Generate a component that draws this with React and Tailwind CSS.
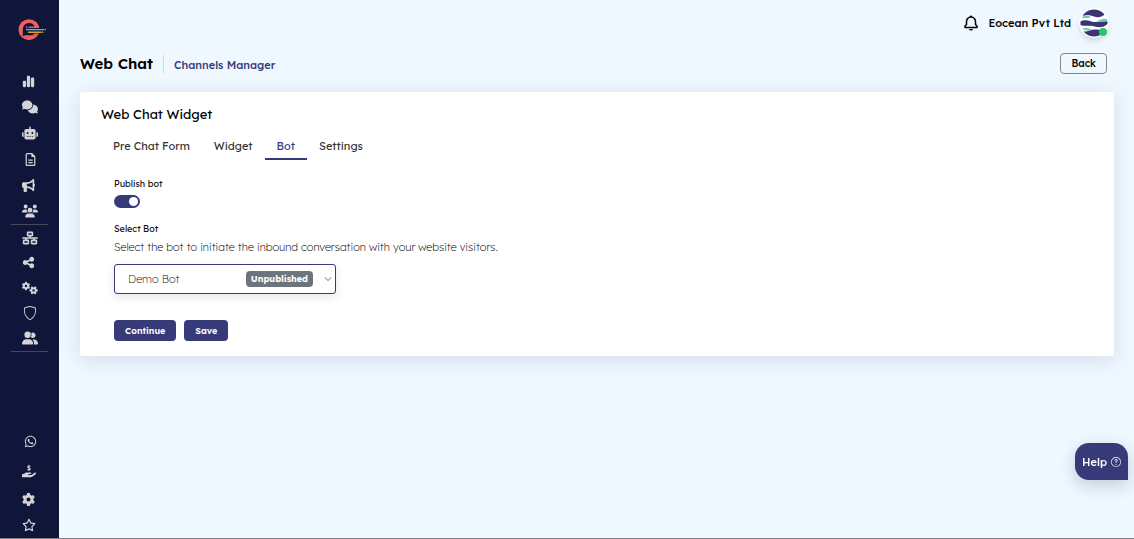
import { useState } from "react";
import {
  FaChartSimple,
  FaComments,
  FaRobot,
  FaRegFileLines,
  FaBullhorn,
  FaUsers,
  FaNetworkWired,
  FaShareNodes,
  FaGears,
  FaUserGroup,
  FaWhatsapp,
  FaHandHoldingDollar,
  FaGear,
  FaRegStar,
} from "react-icons/fa6";
import { BsShield, BsQuestionCircle, BsChevronDown } from "react-icons/bs";
import { BiBell } from "react-icons/bi";

const mainLinks = [
  { label: "Dashboard", Icon: FaChartSimple, size: "size-[13px]" },
  { label: "Conversations", Icon: FaComments, size: "size-4" },
  { label: "Bots", Icon: FaRobot, size: "size-4" },
  { label: "Reports", Icon: FaRegFileLines, size: "ml-0.5 size-[13px]" },
  { label: "Campaigns", Icon: FaBullhorn, size: "size-[13px]" },
  { label: "Audience", Icon: FaUsers, size: "size-4" },
];

const manageLinks = [
  { label: "Channels", Icon: FaNetworkWired, size: "size-4" },
  { label: "Integrations", Icon: FaShareNodes, size: "size-[13px]" },
  { label: "Automation", Icon: FaGears, size: "size-4" },
  { label: "Security", Icon: BsShield, size: "ml-px size-[14px]" },
  { label: "Users", Icon: FaUserGroup, size: "size-4" },
];

const accountLinks = [
  { label: "WhatsApp", Icon: FaWhatsapp, size: "ml-0.5 size-[13px]" },
  { label: "Billing", Icon: FaHandHoldingDollar, size: "size-[14px]" },
];

const settingLinks = [
  { label: "Settings", Icon: FaGear, size: "size-[13px]" },
  { label: "Favourites", Icon: FaRegStar, size: "size-[14px]" },
];

function NavGroup({ links, rowClass, className = "" }) {
  return (
    <ul className={className}>
      {links.map(({ label, Icon, size }) => (
        <li key={label}>
          <a href="#" aria-label={label} className={`flex items-center pl-[11px] ${rowClass}`}>
            <Icon className={size} />
          </a>
        </li>
      ))}
    </ul>
  );
}

function Logo() {
  return (
    <svg viewBox="0 0 28 22" className="h-[22px] w-7" aria-hidden="true">
      <circle cx="11" cy="10.700" r="10.500" fill="#ee5e62" />
      <path d="M4.800 17.200V10.500a6.300 6.300 0 0 1 12.300-2.200H22V14.600H16.500L14.500 16.200H7z" fill="#10163a" />
      <path d="M8 8.200h1.400M10.500 8.200H21" stroke="#ee5e62" strokeWidth="1.400" />
      <path d="M8 10.600h18M26.600 10.600H28" stroke="#54c3b8" strokeWidth="1.300" />
      <path d="M10 13.200h13.500M24.200 13.200h1.200" stroke="#d5a62c" strokeWidth="1.600" />
    </svg>
  );
}

function Avatar() {
  return (
    <span className="relative block size-[30px] rounded-full bg-white shadow-md">
      <svg viewBox="0 0 30 30" className="size-full" aria-hidden="true">
        <defs>
          <clipPath id="avatar-clip">
            <circle cx="15" cy="15" r="13.600" />
          </clipPath>
        </defs>
        <g clipPath="url(#avatar-clip)">
          <path d="M4 6C8-1 22-1 26 6 24 8 20 10.500 15 8.500 11 7 8 6 4 8z" fill="#3a3474" />
          <path d="M2.500 10C5 6.500 9 7 12 9 9 10.500 6 10 2.500 10z" fill="#7cc5b8" />
          <path d="M1 13.500c5-2.500 9-1 13.500.5 5 .5 9-1.500 14.500-.5v2c-4 4-9 4.500-13.500 3S6 18.500 1 17z" fill="#3a3474" />
          <path d="M17 13.200c4-1 7-3.500 11.500-2v1.800c-4.500 1-7 1.200-11.500.2z" fill="#7cc5b8" />
          <path d="M3 20.500c4-1 7-.5 10 1.200-3 1.300-7 1.300-10-1.200z" fill="#7cc5b8" />
          <path d="M4.500 23.500c6 0 8-2.500 13.500-2s6 1 8 1.500C22 31 9 31 4.500 23.500z" fill="#3a3474" />
        </g>
      </svg>
      <span className="absolute right-0.5 bottom-0.5 size-2 rounded-full bg-[#28c76f]" />
    </span>
  );
}

const tabs = ["Pre Chat Form", "Widget", "Bot", "Settings"];

export default function App() {
  const [tab, setTab] = useState("Bot");
  const [published, setPublished] = useState(true);

  return (
    <div className="flex min-h-screen border-b border-[#7d8085] bg-[#eff7ff] font-['Lexend','Inter',sans-serif] text-black">
      <nav aria-label="Main" className="flex w-[59px] shrink-0 flex-col bg-[#10163a] px-[11px] text-[#d4d4d6]">
        <a href="#" aria-label="Home" className="mt-[19px] mb-[27px] ml-[7px] block">
          <Logo />
        </a>
        <NavGroup links={mainLinks} rowClass="h-[26px]" className="border-b border-[#44485f]" />
        <NavGroup links={manageLinks} rowClass="h-[25px]" className="border-b border-[#44485f] pb-px" />
        <NavGroup links={accountLinks} rowClass="h-[30px]" className="mt-auto" />
        <NavGroup links={settingLinks} rowClass="h-[26px]" />
      </nav>

      <div className="flex min-w-0 flex-1 flex-col pr-5 pl-[21px]">
        <header className="flex items-center justify-end gap-2 pt-2 pr-[5px]">
          <button type="button" aria-label="Notifications">
            <BiBell className="size-[18px]" />
          </button>
          <div className="flex items-center gap-2">
            <span className="text-[11px] leading-4 font-medium">Eocean Pvt Ltd</span>
            <Avatar />
          </div>
        </header>

        <div className="mt-[15px] flex items-center pr-[7px]">
          <h1 className="border-r border-[#d3d6e2] pr-2.5 text-[15px] leading-[18px] font-semibold">Web Chat</h1>
          <a href="#" className="pt-0.5 pl-2.5 text-[11px] leading-4 font-medium text-[#373a78]">
            Channels Manager
          </a>
          <button
            type="button"
            className="ml-auto h-[21px] rounded-[4px] border border-[#83888f] px-2.5 text-[10px] leading-4 font-medium"
          >
            Back
          </button>
        </div>

        <main className="mt-[18px] rounded-[3px] bg-white px-[21px] pt-3 pb-[15px] shadow-[0_4px_20px_rgba(34,41,80,0.12)]">
          <h2 className="text-[13px] leading-5 font-normal">Web Chat Widget</h2>

          <div role="tablist" className="mt-2 flex">
            {tabs.map((name) => (
              <button
                key={name}
                type="button"
                role="tab"
                aria-selected={tab === name}
                onClick={() => setTab(name)}
                className={`h-7 border-b-2 px-3 pt-0.5 text-[11px] leading-4 font-normal ${
                  tab === name ? "border-[#373a78] text-[#373a78]" : "border-transparent text-[#333]"
                }`}
              >
                {name}
              </button>
            ))}
          </div>

          <form className="px-[13px] pt-4" onSubmit={(e) => e.preventDefault()}>
            <label htmlFor="publish" className="block text-[9px] leading-4 font-normal text-[#111]">
              Publish bot
            </label>
            <input
              id="publish"
              type="checkbox"
              role="switch"
              checked={published}
              onChange={(e) => setPublished(e.target.checked)}
              className="mt-[3px] flex h-[13px] w-[26px] appearance-none items-center rounded-full bg-[#b8bac6] px-0.5 before:block before:size-[9px] before:rounded-full before:bg-white checked:justify-end checked:bg-[#373a78]"
            />

            <label htmlFor="bot" className="mt-[13px] block text-[9px] leading-4 font-normal text-[#111]">
              Select Bot
            </label>
            <p className="text-[11px] leading-5 font-extralight text-black">
              Select the bot to initiate the inbound conversation with your website visitors.
            </p>
            <div className="relative mt-[7px] w-[222px] max-w-full">
              <select
                id="bot"
                defaultValue="demo"
                className="block h-[30px] w-full appearance-none rounded-[3px] border border-[#373a78] bg-white pr-24 pl-[13px] text-[11px] leading-4 font-extralight text-[#111] shadow-[0_3px_8px_rgba(34,41,80,0.12)]"
              >
                <option value="demo">Demo Bot</option>
              </select>
              <span className="pointer-events-none absolute inset-y-0 right-1 flex items-center gap-[11px]">
                <span className="rounded-[4px] bg-[#6c757d] px-[5px] text-[9px] leading-4 font-bold text-white">
                  Unpublished
                </span>
                <BsChevronDown className="size-2 text-[#333]" />
              </span>
            </div>

            <div className="mt-[26px] flex gap-2">
              <button
                type="submit"
                className="h-[21px] rounded-[4px] bg-[#373a78] px-[11px] text-[9px] leading-4 font-semibold text-white"
              >
                Continue
              </button>
              <button
                type="button"
                className="h-[21px] rounded-[4px] bg-[#373a78] px-[11px] text-[9px] leading-4 font-semibold text-white"
              >
                Save
              </button>
            </div>
          </form>
        </main>
      </div>

      <button
        type="button"
        className="fixed right-1.5 bottom-[59px] flex h-[37px] items-center gap-1 rounded-[14px] rounded-br-none bg-[#373a78] px-[7px] text-[11px] leading-4 font-medium text-white shadow-[0_5px_16px_rgba(34,60,80,0.22)]"
      >
        Help
        <BsQuestionCircle className="size-2.5" />
      </button>
    </div>
  );
}
